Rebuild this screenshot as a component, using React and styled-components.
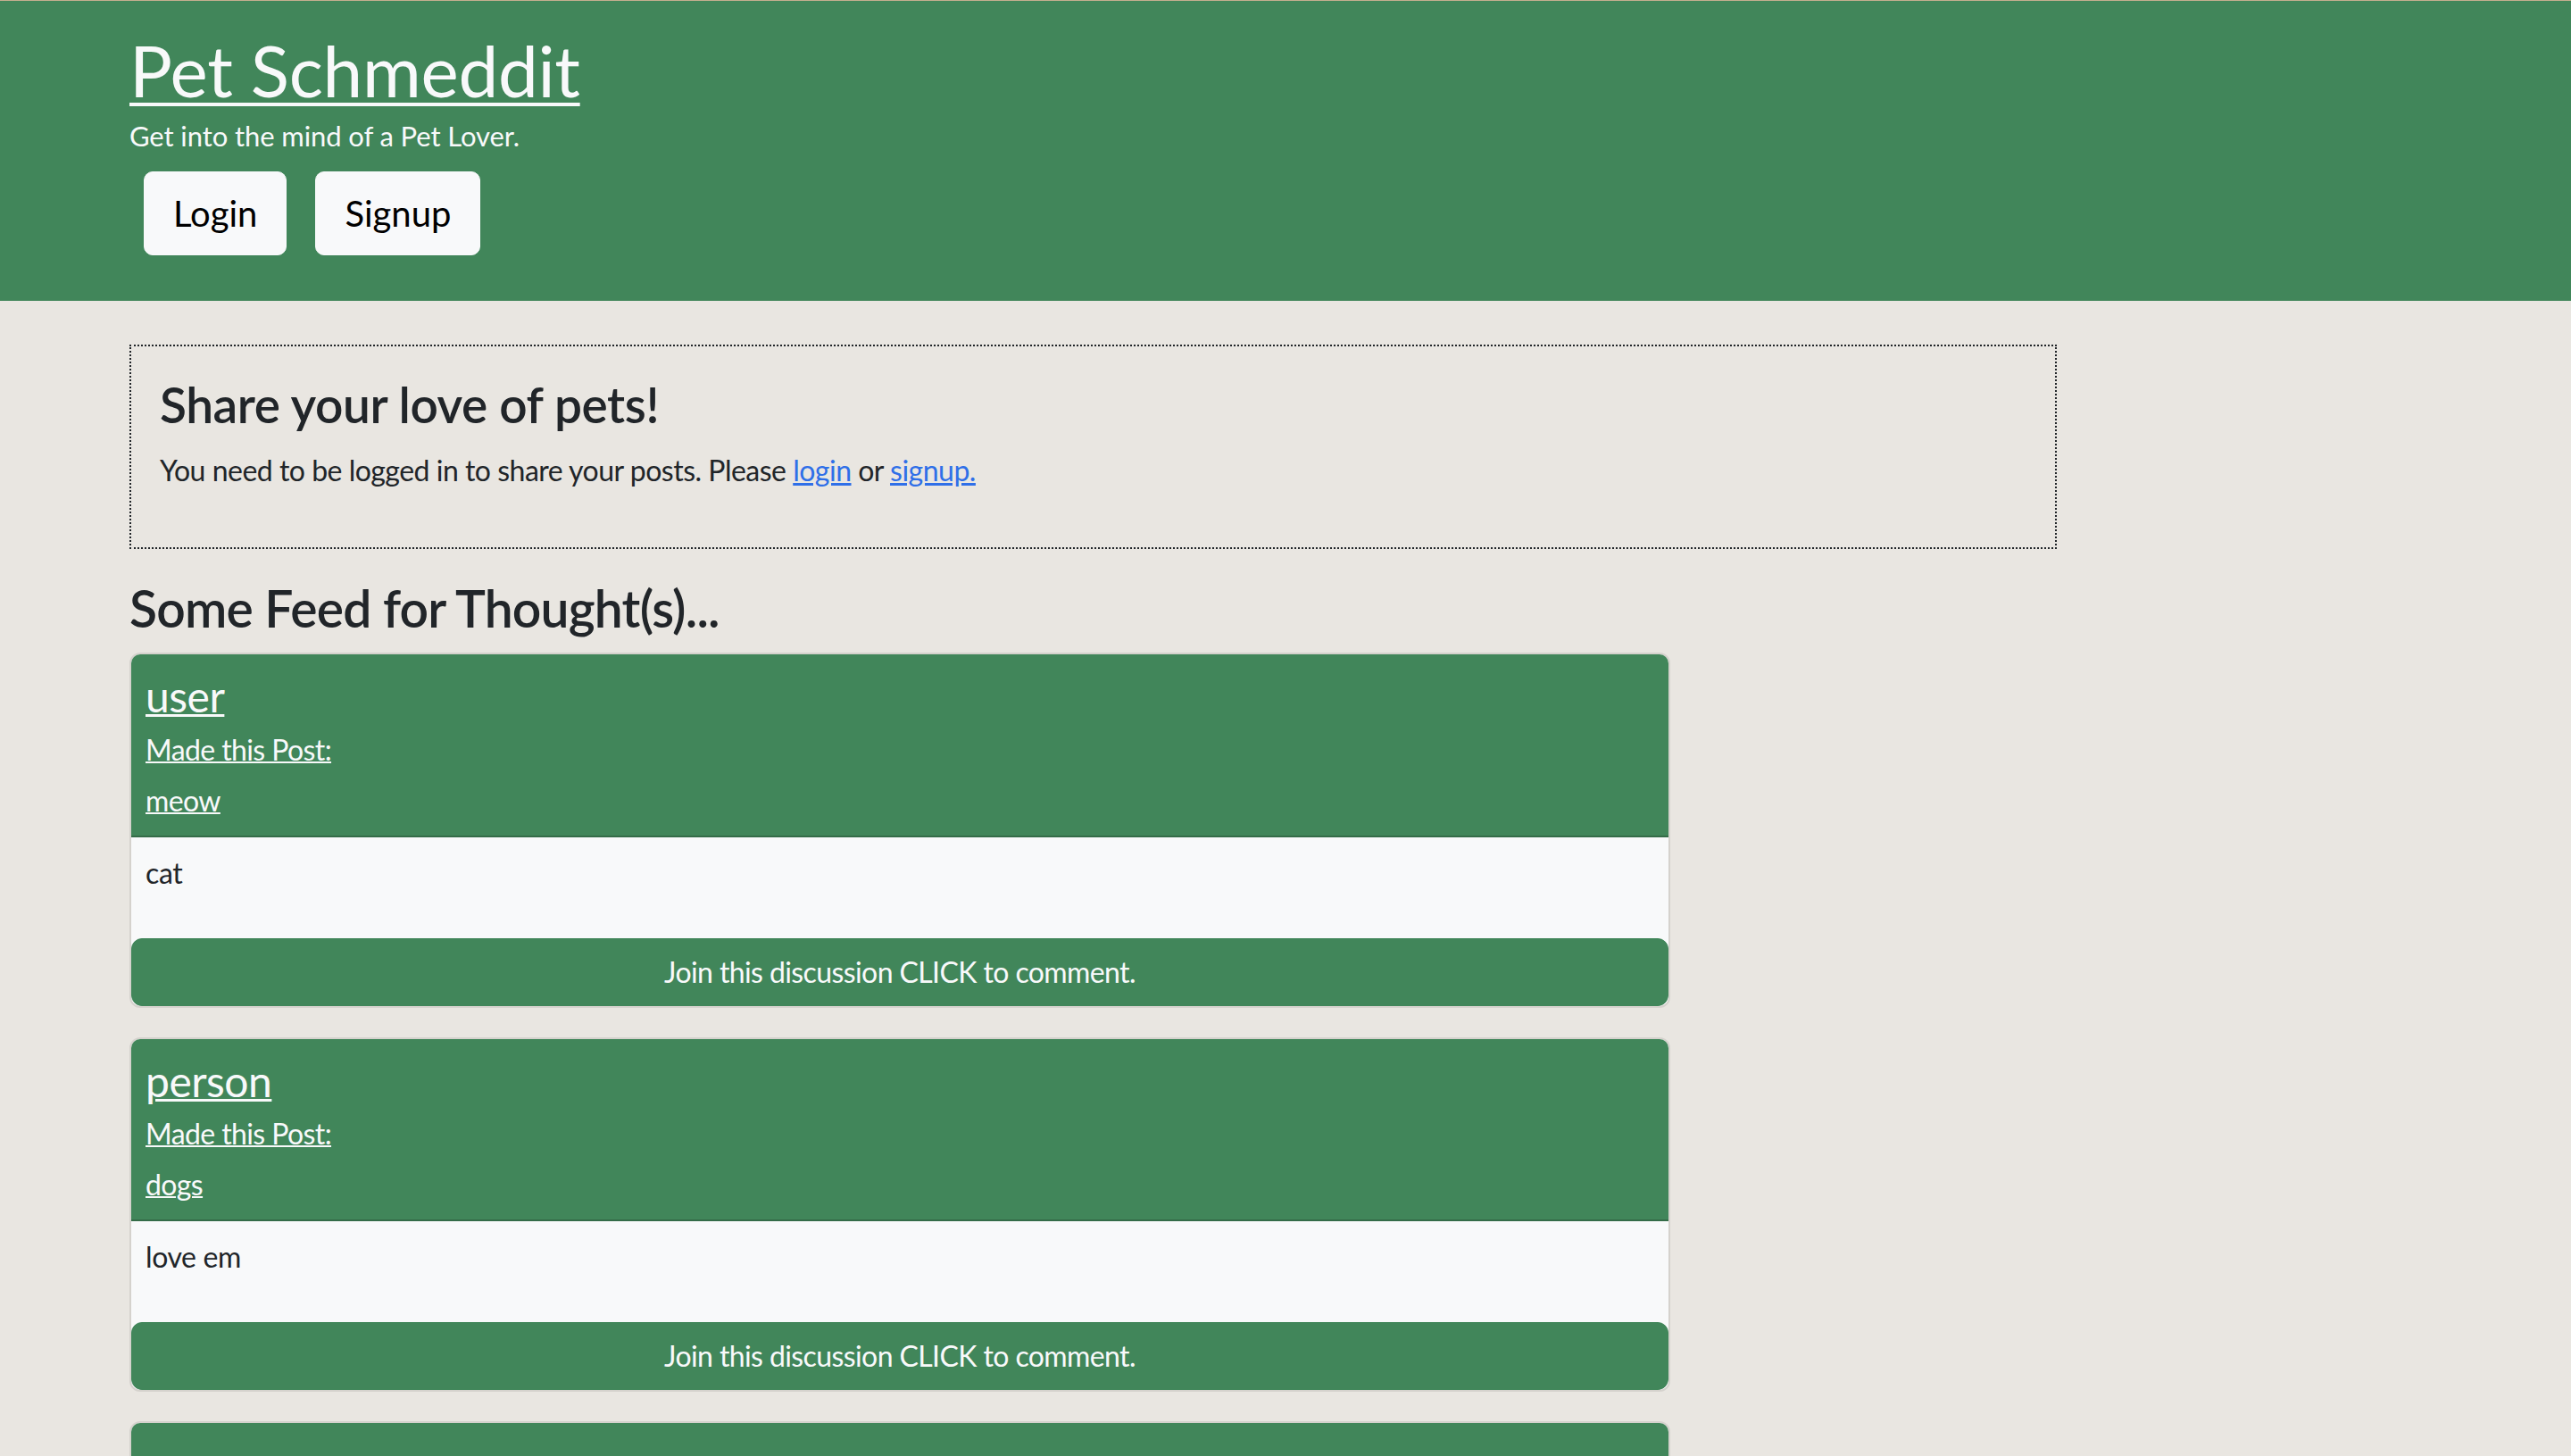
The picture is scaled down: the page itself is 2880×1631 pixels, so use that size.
import styled, { createGlobalStyle } from "styled-components";

const posts = [
  { author: "user", title: "meow", text: "cat" },
  { author: "person", title: "dogs", text: "love em" },
  { author: "owner", title: "birds", text: "tweet tweet" },
];

const GlobalStyle = createGlobalStyle`
  * {
    box-sizing: border-box;
  }

  body {
    margin: 0;
    background: #e9e6e1;
    color: #212529;
    font-family: Lato, "Open Sans", "Liberation Sans", sans-serif;
  }
`;

const App = () => {
  return (
    <>
      <GlobalStyle />
      <Header>
        <SiteTitle>
          <a href="#home">Pet Schmeddit</a>
        </SiteTitle>
        <Tagline>Get into the mind of a Pet Lover.</Tagline>
        <NavButtons>
          <NavButton>Login</NavButton>
          <NavButton>Signup</NavButton>
        </NavButtons>
      </Header>

      <Main>
        <ShareBox>
          <ShareHeading>Share your love of pets!</ShareHeading>
          <ShareText>
            You need to be logged in to share your posts. Please{" "}
            <TextLink href="#login">login</TextLink> or{" "}
            <TextLink href="#signup">signup.</TextLink>
          </ShareText>
        </ShareBox>

        <FeedHeading>Some Feed for Thought(s)...</FeedHeading>

        {posts.map((post, index) => (
          <Card key={index}>
            <CardHeader>
              <Author href="#profile">{post.author}</Author>
              <HeaderLink href="#post">Made this Post:</HeaderLink>
              <HeaderLink href="#post" last>
                {post.title}
              </HeaderLink>
            </CardHeader>
            <CardBody>
              <PostText>{post.text}</PostText>
            </CardBody>
            <CommentButton>Join this discussion CLICK to comment.</CommentButton>
          </Card>
        ))}
      </Main>
    </>
  );
};

export default App;

const Header = styled.header`
  background: #41865a;
  border-top: 1px solid #c5ae8f;
  padding: 29px 145px 51px;
`;

const SiteTitle = styled.h1`
  margin: 0;
  font-size: 80px;
  line-height: 96px;
  font-weight: 400;
  letter-spacing: -0.3px;

  a {
    color: #f8f9fa;
    text-decoration: underline;
    text-decoration-thickness: 4px;
    text-underline-offset: 6px;
  }
`;

const Tagline = styled.p`
  margin: 5px 0 0;
  font-size: 31px;
  line-height: 43px;
  color: #f8f9fa;
  letter-spacing: -0.1px;
`;

const NavButtons = styled.div`
  display: flex;
  gap: 32px;
  margin: 18px 0 0 16px;
`;

const NavButton = styled.button`
  background: #f8f9fa;
  border: 1px solid #f8f9fa;
  border-radius: 10px;
  padding: 16px 32px;
  font-family: inherit;
  font-size: 40px;
  line-height: 60px;
  color: #000;
  cursor: pointer;
`;

const Main = styled.main`
  padding: 49px 145px 0;
`;

const ShareBox = styled.section`
  width: 2159px;
  border: 2px dotted #212529;
  padding: 32px;
`;

const ShareHeading = styled.h3`
  margin: 0 0 16px;
  font-size: 55px;
  line-height: 67px;
  font-weight: 600;
  letter-spacing: -0.4px;
`;

const ShareText = styled.p`
  margin: 0 0 30px;
  font-size: 32px;
  line-height: 48px;
  letter-spacing: -0.5px;
`;

const TextLink = styled.a`
  color: #2f6fe8;
  text-decoration: underline;
`;

const FeedHeading = styled.h2`
  margin: 31px 0 15px;
  font-size: 57px;
  line-height: 70px;
  font-weight: 600;
  letter-spacing: -0.8px;
`;

const Card = styled.article`
  width: 1726px;
  margin-bottom: 33px;
  background: #f8f9fa;
  border: 2px solid #d5d2cd;
  border-radius: 12px;
  overflow: hidden;
`;

const CardHeader = styled.div`
  display: flex;
  flex-direction: column;
  align-items: flex-start;
  background: #41865a;
  border-bottom: 2px solid #346c48;
  padding: 18px 16px 15px;
`;

const Author = styled.a`
  margin-bottom: 7px;
  font-size: 48px;
  line-height: 1.2;
  color: #f8f9fa;
  text-decoration: underline;
  text-decoration-thickness: 3px;
  letter-spacing: -0.5px;
`;

const HeaderLink = styled.a`
  margin-bottom: ${(props) => (props.last ? "0" : "9px")};
  font-size: 32px;
  line-height: 48px;
  color: #f8f9fa;
  text-decoration: underline;
  text-decoration-thickness: 2px;
  letter-spacing: -0.6px;
`;

const CardBody = styled.div`
  padding: 16px 16px 17px;
`;

const PostText = styled.p`
  margin: 0 0 32px;
  font-size: 32px;
  line-height: 48px;
  color: #212529;
  letter-spacing: -0.4px;
`;

const CommentButton = styled.button`
  display: block;
  width: 100%;
  background: #41865a;
  border: 1px solid #41865a;
  border-radius: 12px;
  padding: 13px 24px;
  font-family: inherit;
  font-size: 32px;
  line-height: 48px;
  color: #f8f9fa;
  letter-spacing: -0.6px;
  cursor: pointer;
`;
